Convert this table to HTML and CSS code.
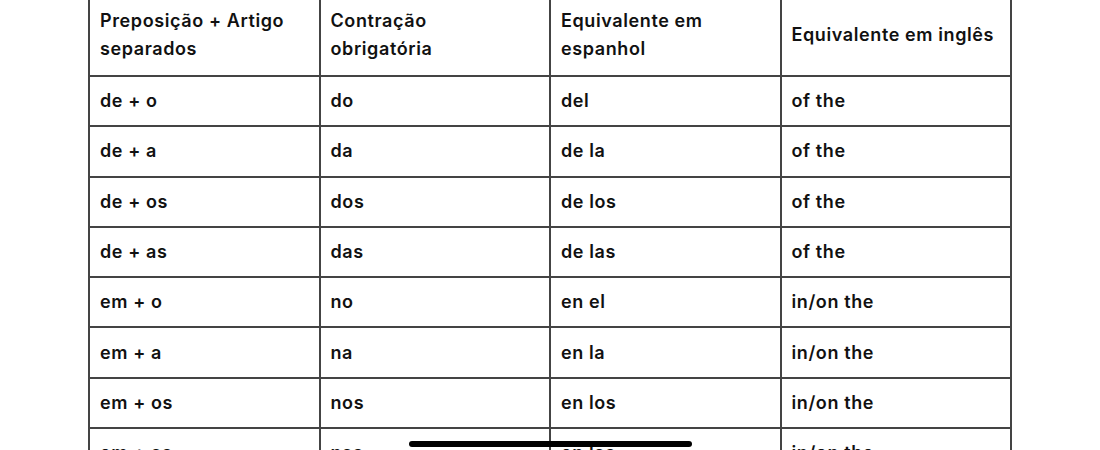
FILE: index.html
```html
<!DOCTYPE html>
<html lang="pt">
<head>
<meta charset="utf-8">
<title>Contrações</title>
<link rel="stylesheet" href="styles.css">
</head>
<body>
<div class="page">
  <table class="grid">
    <thead>
      <tr>
        <th>Preposição + Artigo<br>separados</th>
        <th>Contração<br>obrigatória</th>
        <th>Equivalente em<br>espanhol</th>
        <th>Equivalente em inglês</th>
      </tr>
    </thead>
    <tbody>
      <tr><td>de + o</td><td>do</td><td>del</td><td>of the</td></tr>
      <tr><td>de + a</td><td>da</td><td>de la</td><td>of the</td></tr>
      <tr><td>de + os</td><td>dos</td><td>de los</td><td>of the</td></tr>
      <tr><td>de + as</td><td>das</td><td>de las</td><td>of the</td></tr>
      <tr><td>em + o</td><td>no</td><td>en el</td><td>in/on the</td></tr>
      <tr><td>em + a</td><td>na</td><td>en la</td><td>in/on the</td></tr>
      <tr><td>em + os</td><td>nos</td><td>en los</td><td>in/on the</td></tr>
      <tr><td>em + as</td><td>nas</td><td>en las</td><td>in/on the</td></tr>
    </tbody>
  </table>
</div>
<div class="home-indicator"></div>
</body>
</html>
```
FILE: styles.css
```css
html, body {
  margin: 0;
  padding: 0;
  background: #ffffff;
  width: 1100px;
  height: 450px;
  overflow: hidden;
}
body {
  position: relative;
  font-family: Inter, "Liberation Sans", sans-serif;
  color: #111111;
}
.page {
  padding-left: 88px;
  margin-top: -7px;
}
.grid {
  border-collapse: collapse;
  table-layout: fixed;
  width: 924px;
}
.grid th,
.grid td {
  border: 2px solid #444444;
  text-align: left;
  vertical-align: middle;
  padding: 0 10px;
  font-size: 18px;
  font-weight: 600;
  letter-spacing: 0.6px;
  line-height: 28px;
  width: 25%;
}
.grid th {
  height: 80px;
}
.grid td {
  height: 48.3px;
}
.home-indicator {
  position: absolute;
  left: 409px;
  top: 441px;
  width: 283px;
  height: 6px;
  border-radius: 3px;
  background: #000000;
}
```
